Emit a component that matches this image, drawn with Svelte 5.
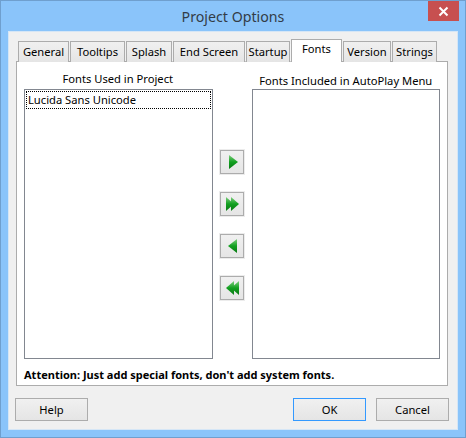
<script>
	const tabs = [
		{ name: "General", width: 51 },
		{ name: "Tooltips", width: 55 },
		{ name: "Splash", width: 46 },
		{ name: "End Screen", width: 72 },
		{ name: "Startup", width: 44 },
		{ name: "Fonts", width: 51, active: true },
		{ name: "Version", width: 48 },
		{ name: "Strings", width: 45 },
	];
	const usedFonts = ["Lucida Sans Unicode"];
	const moves = [
		{ id: "add", points: ["6,1 15,8 6,15"] },
		{ id: "add-all", points: ["3,1 11,8 3,15", "8,1 16,8 8,15"] },
		{ id: "remove", points: ["14,1 5,8 14,15"] },
		{ id: "remove-all", points: ["16,1 8,8 16,15", "11,1 3,8 11,15"] },
	];
</script>

<div class="window">
	<header class="titlebar">
		<h1>Project Options</h1>
		<button class="close" aria-label="Close">
			<svg width="11" height="11" viewBox="0 0 11 11">
				<path d="M1.5 1.5 9.5 9.5M9.5 1.5 1.5 9.5" stroke="#fff" stroke-width="2" />
			</svg>
		</button>
	</header>

	<div class="dialog">
		<div class="tabs">
			{#each tabs as tab}
				<div class="tab" class:active={tab.active} style="width: {tab.width}px">{tab.name}</div>
			{/each}
		</div>

		<section class="panel">
			<div class="columns">
				<div class="column">
					<div class="caption used">Fonts Used in Project</div>
					<ul class="listbox">
						{#each usedFonts as font}
							<li>{font}</li>
						{/each}
					</ul>
				</div>

				<div class="moves">
					{#each moves as move}
						<button class="move" aria-label={move.id}>
							<svg width="18" height="16" viewBox="0 0 18 16">
								<defs>
									<linearGradient id="green-{move.id}" x1="0" y1="0" x2="0" y2="1">
										<stop offset="0" stop-color="#7fcf7f" />
										<stop offset="0.5" stop-color="#12a020" />
										<stop offset="1" stop-color="#0a7a14" />
									</linearGradient>
								</defs>
								{#each move.points as points}
									<polygon {points} fill="url(#green-{move.id})" />
								{/each}
							</svg>
						</button>
					{/each}
				</div>

				<div class="column">
					<div class="caption included">Fonts Included in AutoPlay Menu</div>
					<div class="listbox"></div>
				</div>
			</div>
			<p class="note">Attention: Just add special fonts, don't add system fonts.</p>
		</section>

		<footer class="actions">
			<button class="btn">Help</button>
			<span class="spacer"></span>
			<button class="btn default">OK</button>
			<button class="btn">Cancel</button>
		</footer>
	</div>

	<div class="watermark">SOFTPEDIA</div>
</div>

<style>
	:global(body) {
		margin: 0;
	}
	.window {
		position: relative;
		box-sizing: border-box;
		width: 466px;
		height: 438px;
		padding: 0 7px 7px;
		background: #8ac4fa;
		border: 1px solid #6f9fce;
		font-family: "Noto Sans", "Open Sans", sans-serif;
		font-size: 11.2px;
		color: #000;
		overflow: hidden;
	}
	.titlebar {
		height: 30px;
		display: flex;
		justify-content: center;
		align-items: center;
		position: relative;
	}
	.titlebar h1 {
		margin: 0;
		font-size: 14.2px;
		font-weight: 400;
		color: #333c47;
	}
	.close {
		position: absolute;
		top: 0;
		right: -1px;
		width: 31px;
		height: 20px;
		padding: 0;
		border: 0;
		background: #c75050;
		display: flex;
		align-items: center;
		justify-content: center;
	}
	.dialog {
		height: 399px;
		box-sizing: border-box;
		padding: 8px 9px 0 7px;
		background: #f0f0f0;
		border: 1px solid #d5e6f6;
		display: flex;
		flex-direction: column;
	}
	.tabs {
		display: flex;
		height: 22px;
		align-items: flex-end;
		padding-left: 2px;
		position: relative;
		z-index: 1;
		margin-bottom: -1px;
	}
	.tab {
		box-sizing: border-box;
		height: 21px;
		margin-right: 1px;
		border: 1px solid #acacac;
		border-bottom: 0;
		background: linear-gradient(#f0f0f0, #e5e5e5);
		text-align: center;
		line-height: 19px;
		white-space: nowrap;
	}
	.tab.active {
		height: 23px;
		background: #fff;
		line-height: 17px;
		padding-bottom: 4px;
	}
	.panel {
		box-sizing: border-box;
		height: 325px;
		padding: 0 7px;
		background: #fff;
		border: 1px solid #acacac;
		display: flex;
		flex-direction: column;
	}
	.columns {
		display: flex;
		height: 297px;
	}
	.column {
		width: 189px;
		display: flex;
		flex-direction: column;
	}
	.caption {
		height: 27px;
		text-align: center;
		box-sizing: border-box;
	}
	.caption.used {
		padding-top: 9px;
		padding-right: 1px;
	}
	.caption.included {
		padding-top: 11px;
	}
	.listbox {
		flex: 1;
		margin: 0;
		padding: 1px;
		list-style: none;
		border: 1px solid #828790;
		background: #fff;
	}
	.listbox li {
		height: 18px;
		box-sizing: border-box;
		padding-left: 1px;
		line-height: 15px;
		border: 1px dotted #000;
		white-space: nowrap;
	}
	.moves {
		width: 39px;
		padding-top: 88px;
		padding-left: 7px;
		box-sizing: border-box;
		display: flex;
		flex-direction: column;
		gap: 18px;
		flex: none;
	}
	.move {
		box-sizing: border-box;
		width: 24px;
		height: 24px;
		padding: 0;
		border: 1px solid #acacac;
		outline: 1px solid #ececec;
		background: linear-gradient(#f0f0f0, #e5e5e5);
		display: flex;
		align-items: center;
		justify-content: center;
	}
	.note {
		margin: 0;
		padding-top: 8px;
		font-size: 11px;
		font-weight: 700;
		white-space: nowrap;
	}
	.actions {
		display: flex;
		gap: 10px;
		padding-top: 12px;
		margin-left: -1px;
		margin-right: -1px;
	}
	.spacer {
		flex: 1;
	}
	.btn {
		box-sizing: border-box;
		width: 73px;
		height: 23px;
		padding: 0;
		border: 1px solid #acacac;
		background: linear-gradient(#f0f0f0, #e5e5e5);
		font: inherit;
		color: #000;
	}
	.btn.default {
		border-color: #3399ff;
	}
	.watermark {
		position: absolute;
		left: 135px;
		top: 32px;
		font-size: 32px;
		font-weight: 700;
		letter-spacing: 1px;
		color: rgba(255, 255, 255, 0.35);
		pointer-events: none;
		white-space: nowrap;
	}
</style>
